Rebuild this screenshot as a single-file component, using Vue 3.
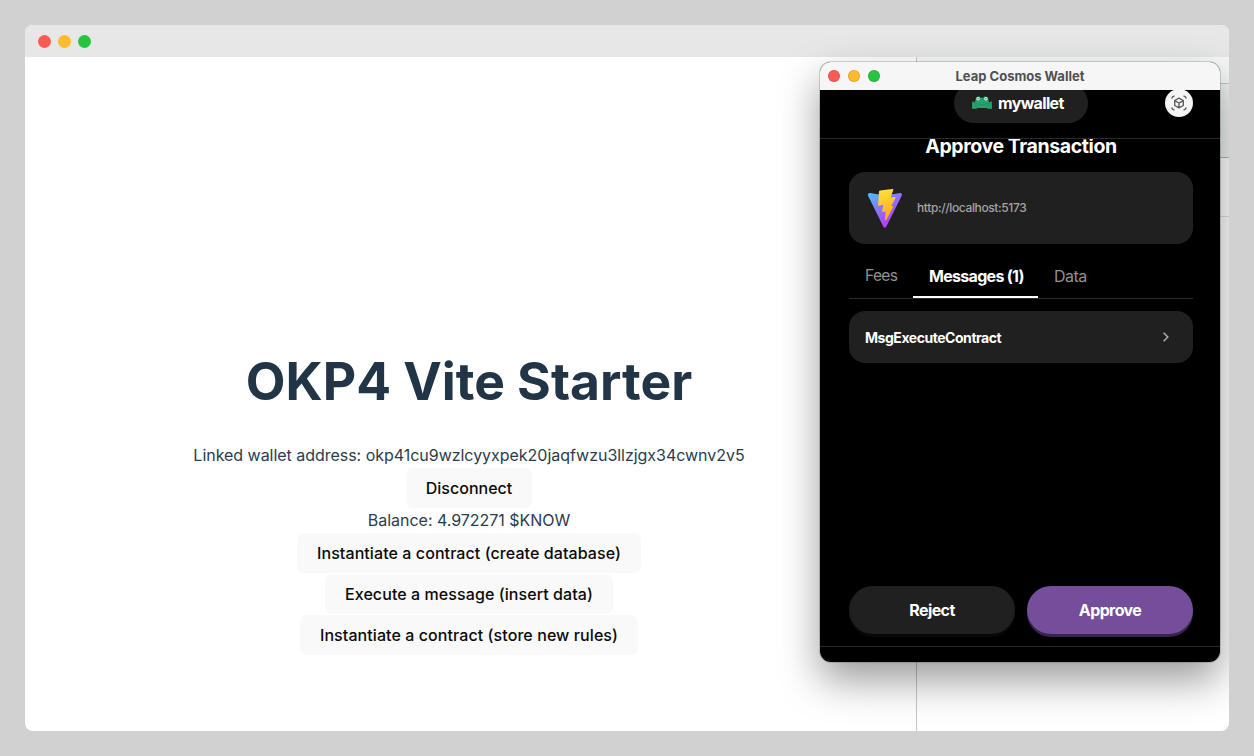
<script setup>
const lights = ['red', 'amber', 'green']
const actions = [
  { label: 'Instantiate a contract (create database)', cls: 'create' },
  { label: 'Execute a message (insert data)', cls: 'insert' },
  { label: 'Instantiate a contract (store new rules)', cls: 'rules' },
]
</script>

<template>
  <div class="desktop">
    <section class="browser">
      <header class="browser-bar">
        <i v-for="c in lights" :key="c" class="light" :class="c"></i>
      </header>
      <div class="browser-body">
        <main class="page">
          <h1>OKP4 Vite Starter</h1>
          <p class="address">Linked wallet address: okp41cu9wzlcyyxpek20jaqfwzu3llzjgx34cwnv2v5</p>
          <button class="disconnect">Disconnect</button>
          <p class="balance">Balance: 4.972271 $KNOW</p>
          <button v-for="a in actions" :key="a.label" :class="a.cls">{{ a.label }}</button>
        </main>
        <aside class="devtools">
          <div class="tools-head"></div>
          <div class="tools-bar"></div>
          <div class="tools-filter"></div>
          <div class="tools-body"></div>
        </aside>
      </div>

      <section class="wallet">
        <header class="wallet-bar">
          <i v-for="c in lights" :key="c" class="light" :class="c"></i>
          <span class="wallet-title">Leap Cosmos Wallet</span>
        </header>
        <div class="account-row">
          <div class="account">
            <svg width="20" height="14" viewBox="0 0 20 14">
              <path d="M.2 5.8C1.6 5.2 2.6 6 3.2 7.4 2.8 5.2 3.2 4.4 3.7 3.4 3.5-.1 8-.4 8.6 1.8h2.8C12-.4 16.5-.1 16.3 3.4c.5 1 .9 1.8.5 4 .6-1.4 1.6-2.2 3-1.6L20 12.8h-4.6l-1-.8H5.6l-1 .8H0z" fill="#24a270" />
              <path d="M4.2 7.2Q10 10.4 15.8 7.2M3.3 7l1.5 4.6M16.7 7l-1.5 4.6" fill="none" stroke="#17895d" stroke-width=".6" />
              <circle cx="6.1" cy="2.7" r="1.7" fill="#e8f5ef" /><circle cx="13.9" cy="2.7" r="1.7" fill="#e8f5ef" />
              <circle cx="6.1" cy="2.8" r=".7" fill="#4b6a5e" /><circle cx="13.9" cy="2.8" r=".7" fill="#4b6a5e" />
            </svg>
            <span>mywallet</span>
          </div>
          <div class="scan">
            <svg width="18" height="18" viewBox="0 0 18 18" fill="none" stroke="#5c5c5c" stroke-width="1.4" stroke-linejoin="round">
              <path d="M9 4.1l4.3 2.4v5L9 13.9l-4.3-2.4v-5zM5 6.8l4 2.2 4-2.2M9 9v4.5" />
              <path d="M1.6 4.4Q2.4 2.4 4.5 1.8M13.5 1.8Q15.6 2.4 16.4 4.4M1.6 13.6Q2.4 15.6 4.5 16.2M13.5 16.2Q15.6 15.6 16.4 13.6" />
            </svg>
          </div>
        </div>
        <div class="wallet-content">
          <h2>Approve Transaction</h2>
          <div class="origin">
            <svg width="36" height="40" viewBox="0 0 36 40">
              <defs>
                <linearGradient id="shield" x1="0" y1="0" x2=".65" y2="1">
                  <stop offset="0" stop-color="#41c5ff" />
                  <stop offset=".48" stop-color="#8b73ff" />
                  <stop offset="1" stop-color="#bd34fe" />
                </linearGradient>
                <linearGradient id="bolt" x1=".4" y1="0" x2=".6" y2="1">
                  <stop offset="0" stop-color="#ffdf3d" />
                  <stop offset="1" stop-color="#ffa813" />
                </linearGradient>
              </defs>
              <path d="M3.1 5L18 7.5 32.9 5c1.6-.3 2.6 1.3 1.8 2.8L19.2 38.7c-.6 1.3-2.1 1.3-2.8 0L1.1 7.8C.4 6.3 1.5 4.7 3.1 5z" fill="url(#shield)" />
              <path d="M13 2.4L25.2.9c.8-.1 1.4.5 1.1 1.2L23.7 9.6l3.8-.7c.8-.1 1.3.6 1 1.2L25 16.6l-1 1.5 1.2-.2c.7 0 1.1.5.8 1.2L19.6 31.6c-.4.9-1.7.6-1.6-.4l.6-7.8-2.4.6c-.7.2-1.2-.3-1.1-1l1.1-6.2-3.9.9c-.7.1-1.2-.3-1.2-1L12 3.6c0-.7.3-1.1 1-1.2z" fill="url(#bolt)" />
            </svg>
            <span>http://localhost:5173</span>
          </div>
          <nav class="tabs">
            <span class="fees">Fees</span>
            <span class="active">Messages (1)</span>
            <span class="data">Data</span>
          </nav>
          <div class="message">
            <span>MsgExecuteContract</span>
            <svg width="8" height="10" viewBox="0 0 8 10" fill="none" stroke="#b0b0b0" stroke-width="1.5">
              <path d="M1.6.8l4.2 4.2-4.2 4.2" />
            </svg>
          </div>
          <div class="decision">
            <div class="btn reject"><span>Reject</span></div>
            <div class="btn approve"><span>Approve</span></div>
          </div>
        </div>
        <footer class="wallet-foot"></footer>
      </section>
    </section>
  </div>
</template>

<style>
body { margin: 0; background: #d1d1d1; }
</style>

<style scoped>
* { box-sizing: border-box; }
.desktop {
  width: 1254px;
  height: 756px;
  padding: 25px;
  overflow: hidden;
  background: #d1d1d1;
  font-family: Inter, "Liberation Sans", sans-serif;
}
.browser {
  position: relative;
  height: 706px;
  display: flex;
  flex-direction: column;
  border-radius: 8px;
  overflow: hidden;
  background: #fff;
}
.browser-bar { height: 32px; flex: none; display: flex; align-items: center; gap: 7px; padding: 1px 0 0 13px; background: #e7e7e7; }
.light { width: 13px; height: 13px; border-radius: 50%; }
.red { background: #fc5b54; }
.amber { background: #fdbb2d; }
.green { background: #27c53f; }
.browser-body { flex: 1; display: flex; }
.page {
  width: 891px;
  padding: 293px 3px 0 0;
  display: flex;
  flex-direction: column;
  align-items: center;
  color: #2a3c4d;
}
h1 { margin: 0 0 31px; font-size: 51.6px; line-height: 62px; font-weight: 700; white-space: nowrap; color: #213547; }
p { margin: 0; font-size: 16px; line-height: 24px; white-space: nowrap; letter-spacing: -.03px; }
button {
  height: 40px;
  margin: 1px 0 0;
  padding: 0 20px;
  border: 0;
  border-radius: 7px;
  background: #f9f9f9;
  color: #0a0a0a;
  font: 500 16px/24px Inter, sans-serif;
  letter-spacing: .08px;
  white-space: nowrap;
}
.disconnect { letter-spacing: 0; }
.devtools { flex: 1; display: flex; flex-direction: column; border-left: 1px solid #c6c6c6; }
.tools-head { height: 27px; background: #f6f8f8; border-bottom: 1px solid #c6c8c8; }
.tools-bar { height: 74px; background: #eff2f2; border-bottom: 1px solid #b9b9b9; }
.tools-filter { height: 59px; border-bottom: 1px solid #dedede; }
.tools-body { flex: 1; }

.wallet {
  position: absolute;
  left: 795px;
  top: 37px;
  width: 400px;
  height: 600px;
  display: flex;
  flex-direction: column;
  border-radius: 11px;
  background: #000;
  color: #fff;
  box-shadow: 0 0 0 1px rgba(0, 0, 0, .15), 0 18px 40px rgba(0, 0, 0, .4);
}
.wallet-bar {
  position: relative;
  height: 28px;
  flex: none;
  display: flex;
  align-items: center;
  gap: 8px;
  padding-left: 8px;
  border-radius: 11px 11px 0 0;
  background: #f6f6f6;
}
.wallet-bar .light { width: 12px; height: 12px; box-shadow: inset 0 0 0 1px rgba(0, 0, 0, .1); }
.wallet-title { position: absolute; left: 0; right: 0; top: 5.5px; text-align: center; color: #505050; font-size: 13px; line-height: 16px; font-weight: 700; }
.account-row {
  position: relative;
  height: 49px;
  flex: none;
  display: flex;
  justify-content: center;
  border-bottom: 1px solid #292929;
  overflow: hidden;
}
.account {
  width: 134px;
  height: 40px;
  margin: -7px 0 0 2px;
  display: flex;
  align-items: center;
  padding-left: 18px;
  gap: 6px;
  border-radius: 20px;
  background: #202020;
  font-size: 16px;
  font-weight: 700;
  letter-spacing: -.65px;
}
.scan {
  position: absolute;
  right: 27px;
  top: -1px;
  width: 28px;
  height: 28px;
  display: flex;
  align-items: center;
  justify-content: center;
  border-radius: 50%;
  background: #f5f5f5;
}
.wallet-content { flex: 1; display: flex; flex-direction: column; padding: 0 27px 0 29px; overflow: hidden; }
h2 { margin: -7px 0 12px; font-size: 19.5px; line-height: 28px; font-weight: 700; text-align: center; white-space: nowrap; letter-spacing: -.4px; }
.origin { height: 72px; display: flex; align-items: center; gap: 14px; padding-left: 18px; border-radius: 16px; background: #202020; color: #a4a4a4; font-size: 12px; line-height: 16px; font-weight: 500; letter-spacing: -.38px; }
.origin span { padding-bottom: 1px; }
.tabs { height: 55px; display: flex; align-items: stretch; border-bottom: 1px solid #2b2b2b; font-size: 16px; line-height: 24px; color: #929292; }
.tabs span { padding-top: 20px; white-space: nowrap; }
.tabs .fees { width: 64px; padding-left: 16px; font-size: 15.5px; letter-spacing: -.65px; }
.tabs .active { width: 125px; padding-left: 16px; border-bottom: 2px solid #fff; color: #fff; font-weight: 700; letter-spacing: -.7px; }
.tabs .data { padding-left: 16px; letter-spacing: -.5px; }
.message { height: 52px; margin-top: 12px; display: flex; align-items: center; justify-content: space-between; padding: 0 23px 0 16px; border-radius: 16px; background: #202020; font-size: 14px; font-weight: 700; letter-spacing: -.46px; }
.decision { display: flex; gap: 12px; margin-top: 223px; }
.btn { width: 166px; height: 48px; display: flex; align-items: center; justify-content: center; border-radius: 24px; font-size: 16px; font-weight: 700; letter-spacing: -.6px; }
.reject { background: #202020; box-shadow: 0 3px 0 #080808; }
.approve { background: #754e9b; box-shadow: 0 3px 0 #38234d; }
.wallet-foot { height: 16px; flex: none; border-top: 1px solid #292929; border-radius: 0 0 11px 11px; }
</style>
